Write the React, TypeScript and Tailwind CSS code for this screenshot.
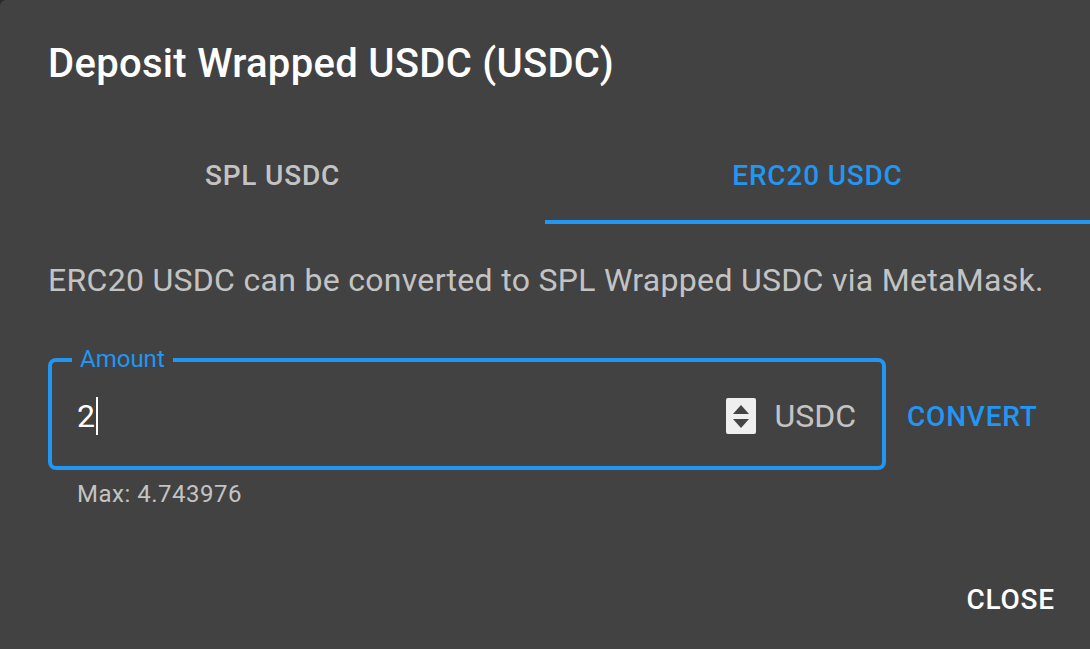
import React from "react";

function Spinner() {
  return (
    <div className="w-[30px] h-[36px] bg-[#efefef] rounded-[2px] flex flex-col items-center justify-center gap-[5px]">
      <svg width="16" height="9" viewBox="0 0 16 9">
        <path d="M8 0 L16 9 L0 9 Z" fill="#444" />
      </svg>
      <svg width="16" height="9" viewBox="0 0 16 9">
        <path d="M0 0 L16 0 L8 9 Z" fill="#444" />
      </svg>
    </div>
  );
}

export default function App() {
  return (
    <div className="w-[1090px] h-[649px] bg-[#2a2a2a] overflow-hidden" style={{ fontFamily: "Roboto, 'Liberation Sans', sans-serif" }}>
      <div className="w-full h-full bg-[#424242] rounded-tl-[6px] flex flex-col">
        <h2 className="px-[48px] pt-[32px] pb-[32px] text-[40px] font-medium leading-[64px] text-white tracking-[0.3px]">
          Deposit Wrapped USDC (USDC)
        </h2>

        <div className="flex h-[96px]">
          <div className="flex-1 flex items-center justify-center text-[28px] font-medium uppercase tracking-[0.8px] text-white/70">
            SPL USDC
          </div>
          <div className="flex-1 flex items-center justify-center text-[28px] font-medium uppercase tracking-[0.8px] text-[#2196f3] border-b-[4px] border-[#2196f3] pt-[4px]">
            ERC20 USDC
          </div>
        </div>

        <div className="px-[48px] pt-[32px] flex-1">
          <p className="text-[32px] leading-[48px] text-white/70 tracking-[0.3px] whitespace-nowrap">
            ERC20 USDC can be converted to SPL Wrapped USDC via MetaMask.
          </p>

          <div className="mt-[54px] flex items-start">
            <div className="flex flex-col">
              <div className="relative w-[838px] h-[112px] border-[4px] border-[#2196f3] rounded-[8px] flex items-center pl-[25px] pr-[26px] pt-[4px]">
                <span className="absolute left-[20px] -top-[18px] px-[8px] bg-[#424242] text-[24px] leading-[30px] text-[#2196f3]">
                  Amount
                </span>
                <div className="flex-1 flex items-center text-[32px] text-white">
                  2<span className="inline-block w-[2px] h-[38px] bg-white ml-[1px]" />
                </div>
                <Spinner />
                <span className="ml-[18px] text-[32px] text-white/70">USDC</span>
              </div>
              <div className="pl-[29px] pt-[8px] text-[24px] leading-[32px] text-white/70 tracking-[0.5px]">
                Max: 4.743976
              </div>
            </div>
            <div className="ml-[21px] h-[112px] pt-[6px] flex items-center text-[28px] font-medium uppercase tracking-[0.8px] text-[#2196f3]">
              Convert
            </div>
          </div>
        </div>

        <div className="flex justify-end pr-[35px] pb-[28px]">
          <span className="text-[28px] font-medium uppercase tracking-[0.8px] text-white">Close</span>
        </div>
      </div>
    </div>
  );
}
